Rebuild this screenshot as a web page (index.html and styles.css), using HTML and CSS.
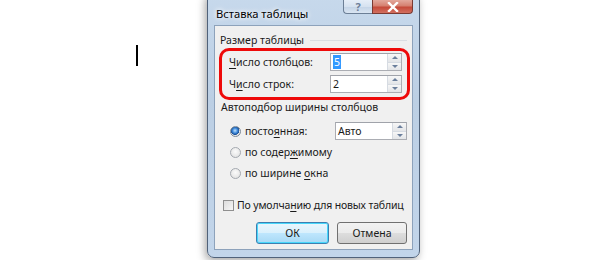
FILE: index.html
```html
<!DOCTYPE html>
<html>
<head>
    <meta charset="utf-8">
    <title>Вставка таблицы</title>
    <link rel="stylesheet" href="styles.css">
</head>
<body>
    <div class="page">
        <div class="caret"></div>

        <div class="dialog">
            <div class="titlebar">
                <span class="title">Вставка таблицы</span>
                <div class="caption-buttons">
                    <div class="cap-btn help">?</div>
                    <div class="cap-btn close">
                        <svg width="12" height="10" viewBox="0 0 12 10">
                            <path d="M2 1 L10 9 M10 1 L2 9" stroke="#fff" stroke-width="2.4" stroke-linecap="square"/>
                        </svg>
                    </div>
                </div>
            </div>

            <div class="client">
                <div class="group-label"><span>Размер таблицы</span></div>

                <!-- red marker around the size fields -->
                <div class="highlight">
                    <div class="field-row">
                        <span class="label"><u>Ч</u>исло столбцов:</span>
                        <div class="spin">
                            <span class="spin-value"><span class="selected">5</span></span>
                            <div class="spin-arrows">
                                <div class="arrow up"></div>
                                <div class="arrow down"></div>
                            </div>
                        </div>
                    </div>
                    <div class="field-row">
                        <span class="label">Ч<u>и</u>сло строк:</span>
                        <div class="spin">
                            <span class="spin-value">2</span>
                            <div class="spin-arrows">
                                <div class="arrow up"></div>
                                <div class="arrow down"></div>
                            </div>
                        </div>
                    </div>
                </div>

                <div class="group-label second">Автоподбор ширины столбцов</div>

                <div class="options">
                    <div class="option-row">
                        <span class="radio checked"></span>
                        <span class="option-text">посто<u>я</u>нная:</span>
                        <div class="spin">
                            <span class="spin-value">Авто</span>
                            <div class="spin-arrows">
                                <div class="arrow up"></div>
                                <div class="arrow down"></div>
                            </div>
                        </div>
                    </div>
                    <div class="option-row">
                        <span class="radio"></span>
                        <span class="option-text">по содер<u>ж</u>имому</span>
                    </div>
                    <div class="option-row">
                        <span class="radio"></span>
                        <span class="option-text">по ширине <u>о</u>кна</span>
                    </div>
                </div>

                <div class="check-row">
                    <span class="checkbox"></span>
                    <span>По умолча<u>н</u>ию для новых таблиц</span>
                </div>

                <div class="buttons">
                    <div class="btn default">ОК</div>
                    <div class="btn">Отмена</div>
                </div>
            </div>
        </div>
    </div>
</body>
</html>
```

FILE: styles.css
```css
/* Insert table dialog, Windows 7 look */
body {
    margin: 0;
    background-color: #fff;
    font-family: 'Noto Sans', 'DejaVu Sans', sans-serif;
    font-size: 10.5px;
    color: #1a1a1a;
}

u {
    text-decoration-thickness: 1px;
    text-underline-offset: 2px;
}

.page {
    display: flex;
    align-items: flex-start;
    height: 260px;
    overflow: hidden;
}

.caret {
    width: 2px;
    height: 21px;
    margin: 45px 0 0 136px;
    background-color: #000;
}

.dialog {
    width: 213px;
    height: 266px;
    margin: -8px 0 0 69px;
    box-sizing: border-box;
    padding: 0 6px 7px 6px;
    border: 1px solid #50627a;
    border-radius: 7px;
    background: linear-gradient(to bottom, #c7d9ec 0%, #bccfe4 40%, #c2d5ea 100%);
    box-shadow: -2px 3px 8px rgba(0, 0, 0, 0.35);
    display: flex;
    flex-direction: column;
}

.titlebar {
    height: 33px;
    display: flex;
    justify-content: space-between;
    align-items: flex-start;
}

.title {
    padding: 14px 0 0 2px;
    line-height: 14px;
    font-size: 11.2px;
    color: #000;
    text-shadow: 0 0 6px #fff, 0 0 4px #fff;
}

.caption-buttons {
    display: flex;
    margin-top: 7px;
}

.cap-btn {
    height: 14px;
    display: flex;
    align-items: center;
    justify-content: center;
    box-sizing: border-box;
    border: 1px solid #6c7f96;
    border-top: none;
}

.help {
    width: 29px;
    border-radius: 0 0 0 4px;
    border-right: none;
    background: linear-gradient(to bottom, #e6eef8 0%, #d6e2f0 50%, #c3d3e6 51%, #d9e5f2 100%);
    color: #6d7f99;
    font-weight: bold;
    font-size: 11px;
    line-height: 12px;
}

.close {
    width: 41px;
    border-radius: 0 0 4px 0;
    border-color: #7a3a32;
    background: linear-gradient(to bottom, #e3a89c 0%, #d58070 45%, #c54a3a 55%, #d27060 100%);
}

.client {
    flex: 1;
    display: flex;
    flex-direction: column;
    background-color: #f0f0f0;
    border: 1px solid #8da2bb;
    padding: 0 5px 5px 0;
}

.group-label {
    display: flex;
    align-items: center;
    gap: 6px;
    margin: 7px 0 1px 5px;
    line-height: 14px;
    white-space: nowrap;
}

.group-label::after {
    content: "";
    flex: 1;
    height: 1px;
    background-color: #dadde2;
}

.group-label.second {
    margin: 0 0 0 6px;
}

.group-label.second::after {
    display: none;
}

.highlight {
    margin: 0 -3px 0 4px;
    padding: 2px 5px 4px 7px;
    border: 3px solid #ee0a0a;
    border-radius: 10px;
    display: flex;
    flex-direction: column;
    gap: 4px;
}

.field-row {
    display: flex;
    justify-content: space-between;
    align-items: center;
}

.spin {
    width: 72px;
    height: 18px;
    flex-shrink: 0;
    box-sizing: border-box;
    display: flex;
    border: 1px solid #abadb3;
    border-top-color: #a0a3aa;
    background-color: #fff;
}

.spin-value {
    flex: 1;
    display: flex;
    align-items: center;
    padding-left: 2px;
    line-height: 14px;
}

.selected {
    background-color: #3399ff;
    color: #fff;
    padding: 0 1px;
}

.spin-arrows {
    width: 13px;
    display: flex;
    flex-direction: column;
    border-left: 1px solid #d6dbe2;
}

.arrow {
    flex: 1;
    display: flex;
    align-items: center;
    justify-content: center;
    background: linear-gradient(to bottom, #f7f7f7, #e3e5e8);
}

.arrow.up {
    border-bottom: 1px solid #d6dbe2;
}

.arrow.up::before,
.arrow.down::before {
    content: "";
    border-left: 3px solid transparent;
    border-right: 3px solid transparent;
}

.arrow.up::before {
    border-bottom: 3px solid #6b7f9c;
}

.arrow.down::before {
    border-top: 3px solid #6b7f9c;
}

.options {
    display: flex;
    flex-direction: column;
    gap: 3px;
    margin-top: 8px;
    padding-left: 15px;
}

.option-row {
    height: 18px;
    display: flex;
    align-items: center;
}

.option-text {
    flex: 1;
    padding-left: 4px;
    line-height: 14px;
}

.radio {
    width: 11px;
    height: 11px;
    flex-shrink: 0;
    box-sizing: border-box;
    border-radius: 50%;
    border: 1px solid #a4a9b0;
    background: radial-gradient(circle at 50% 40%, #fbfbfb 0%, #e6e6e6 70%, #d8d8d8 100%);
}

.radio.checked {
    background: radial-gradient(circle at 45% 40%, #bfe2ff 0%, #3a86d8 35%, #1a4f95 55%, #e9e9e9 62%, #d8d8d8 100%);
    border-color: #7c8a99;
}

.check-row {
    display: flex;
    align-items: center;
    gap: 3px;
    margin: 16px 0 0 8px;
    line-height: 14px;
    white-space: nowrap;
    letter-spacing: -0.15px;
}

.checkbox {
    width: 11px;
    height: 11px;
    flex-shrink: 0;
    box-sizing: border-box;
    border: 1px solid #8f8f8f;
    background: linear-gradient(135deg, #dcdcdc, #f6f6f6);
}

.buttons {
    display: flex;
    justify-content: flex-end;
    gap: 8px;
    margin-top: 10px;
}

.btn {
    width: 70px;
    height: 22px;
    box-sizing: border-box;
    display: flex;
    align-items: center;
    justify-content: center;
    border: 1px solid #707070;
    border-radius: 3px;
    background: linear-gradient(to bottom, #f2f2f2 0%, #ebebeb 50%, #dddddd 51%, #cfcfcf 100%);
}

.btn.default {
    width: 73px;
    border-color: #3c7fb1;
    background: linear-gradient(to bottom, #eaf6fd 0%, #d9f0fc 50%, #bee6fd 51%, #a7d9f5 100%);
    box-shadow: inset 0 0 0 1px #48d7fb;
}
```
